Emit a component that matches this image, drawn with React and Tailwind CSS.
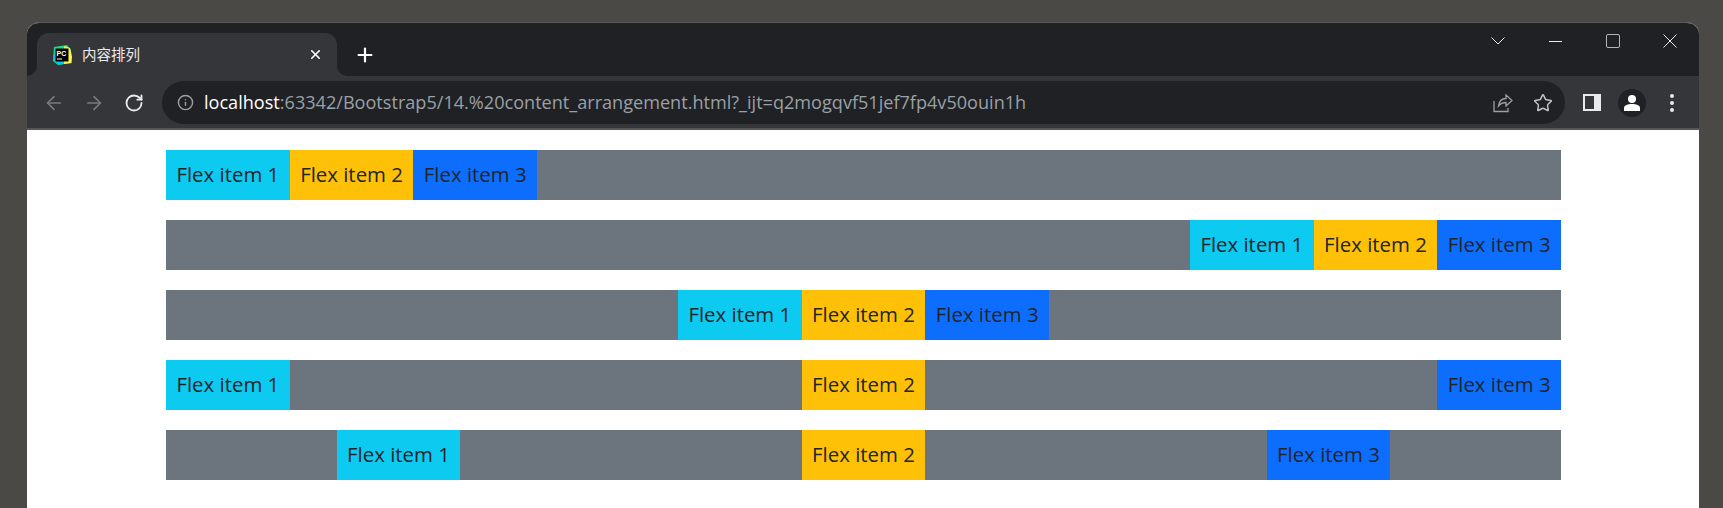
import { Plus, X, ArrowLeft, ArrowRight, RotateCw, Info, Star } from "lucide-react";

const Item = ({ color, children }) => (
  <div className={`w-[123.7px] h-[50px] pb-[2px] flex items-center justify-center text-[20.4px] text-[#212529] ${color}`}>
    {children}
  </div>
);

const Items = () => (
  <>
    <Item color="bg-[#0dcaf0]">Flex item 1</Item>
    <Item color="bg-[#ffc107]">Flex item 2</Item>
    <Item color="bg-[#0d6efd]">Flex item 3</Item>
  </>
);

const App = () => {
  return (
    <div className="h-[508px] overflow-hidden bg-[#4a4945] pt-[22px] pl-[27px] pr-6 font-['Open_Sans','Noto_Sans_CJK_SC',sans-serif]">
      <div className="h-[486px] bg-white rounded-t-xl overflow-hidden flex flex-col border-t border-[#5c5c5c]">
        {/* tab strip */}
        <div className="h-[53px] bg-[#202124] flex shrink-0 pl-[10px] pt-[10px]">
          <div className="relative w-[300px] h-[43px] bg-[#35363a] rounded-t-xl flex items-center pl-[15px] pr-[14px]">
            {/* concave corners at the foot of the tab */}
            <div className="absolute left-[-10px] bottom-0 w-[10px] h-[10px] bg-[#35363a]">
              <div className="w-full h-full bg-[#202124] rounded-br-[10px]" />
            </div>
            <div className="absolute right-[-10px] bottom-0 w-[10px] h-[10px] bg-[#35363a]">
              <div className="w-full h-full bg-[#202124] rounded-bl-[10px]" />
            </div>
            <svg width="20" height="20" viewBox="0 0 20 20" className="shrink-0">
              <path d="M2 2 L15 0 L19 5 L20 18 L6 20 L1 16 Z" fill="#21d789" />
              <path d="M12 1 L18 3 L20 12 L19 18 L12 19 Z" fill="#fcf84a" />
              <path d="M1 10 L3 17 L9 20 L12 17 L5 10 Z" fill="#07c3f2" />
              <rect x="3.5" y="3.5" width="13" height="13" fill="#000" />
              <rect x="5" y="13.5" width="5" height="1" fill="#fff" />
              <text x="4.5" y="10.5" fontSize="7" fontWeight="700" fill="#fff" fontFamily="Liberation Sans, sans-serif">PC</text>
            </svg>
            <span className="ml-[10px] text-[14.5px] text-[#e8eaed] flex-1">内容排列</span>
            <X size={15} strokeWidth={2.5} className="text-white" />
          </div>
          <Plus size={22} strokeWidth={2.4} className="text-white ml-[17px] mt-[11px]" />
          <div className="flex-1 flex items-start justify-end -mt-[2px] pr-[1px] text-[#e8eaed]">
            <div className="w-[58px] flex justify-center">
              <svg width="14" height="8" viewBox="0 0 14 8" fill="none" stroke="currentColor" className="mt-[6px]"><path d="M0.5 0.5 L7 7 L13.5 0.5" /></svg>
            </div>
            <div className="w-[57px] flex justify-center">
              <div className="w-[13px] h-[1px] bg-[#e8eaed] mt-[10px]" />
            </div>
            <div className="w-[57px] flex justify-center">
              <div className="w-[14px] h-[14px] border border-[#b5b6b8] rounded-[2px] mt-[3px]" />
            </div>
            <div className="w-[57px] flex justify-center">
              <svg width="14" height="14" viewBox="0 0 14 14" fill="none" stroke="currentColor" className="mt-[3px]"><path d="M0.5 0.5 L13.5 13.5 M13.5 0.5 L0.5 13.5" /></svg>
            </div>
          </div>
        </div>
        {/* toolbar */}
        <div className="h-[54px] bg-[#35363a] border-b-2 border-[#55565a] flex items-center shrink-0 pl-[16px] pt-[1px] pr-[20px]">
          <ArrowLeft size={22} strokeWidth={1.8} className="text-[#797a7d]" />
          <ArrowRight size={22} strokeWidth={1.8} className="text-[#797a7d] ml-[18px]" />
          <RotateCw size={20} strokeWidth={2.2} className="text-[#e8eaed] ml-[19px]" />
          <div className="ml-[18px] w-[1403px] h-[43px] bg-[#202124] rounded-full flex items-center pl-[15px] pr-[12px]">
            <Info size={17} strokeWidth={2} className="text-[#9aa0a6]" />
            <div className="ml-[10px] mt-[1px] flex-1 text-[18.1px] text-[#9aa0a6] whitespace-nowrap">
              <span className="text-white">localhost</span>:63342/Bootstrap5/14.%20content_arrangement.html?_ijt=q2mogqvf51jef7fp4v50ouin1h
            </div>
            <svg width="20" height="20" viewBox="0 0 20 20" fill="none" stroke="#9aa0a6" strokeWidth="1.3">
              <path d="M19 7.5 L13 2 V5.5 C8 5.5 6 9 5.5 13 C8 10 10 9.5 13 9.5 V13 Z" />
              <path d="M1 8 V18.5 H15 V15" />
            </svg>
            <Star size={20} strokeWidth={1.8} className="text-[#bdc1c6] ml-[20px]" />
          </div>
          <div className="ml-[18px] w-[18px] h-[17px] border-2 border-[#e8eaed] bg-[#e8eaed] flex">
            <div className="w-[9px] bg-[#35363a]" />
          </div>
          <div className="ml-[17px] w-[28px] h-[28px] rounded-full bg-[#202124] flex items-center justify-center">
            <svg width="18" height="18" viewBox="0 0 18 18" fill="#fff">
              <circle cx="9" cy="5" r="4" />
              <path d="M1 17 V14 C1 11 5 10 9 10 C13 10 17 11 17 14 V17 Z" />
            </svg>
          </div>
          <div className="ml-[24px] flex flex-col gap-[3px]">
            <div className="w-[4px] h-[4px] rounded-full bg-[#e8eaed]" />
            <div className="w-[4px] h-[4px] rounded-full bg-[#e8eaed]" />
            <div className="w-[4px] h-[4px] rounded-full bg-[#e8eaed]" />
          </div>
        </div>
        {/* page */}
        <div className="flex-1 pt-5 pl-[139px] pr-[138px] flex flex-col gap-5">
          <div className="flex bg-[#6c757d] justify-start"><Items /></div>
          <div className="flex bg-[#6c757d] justify-end"><Items /></div>
          <div className="flex bg-[#6c757d] justify-center"><Items /></div>
          <div className="flex bg-[#6c757d] justify-between"><Items /></div>
          <div className="flex bg-[#6c757d] justify-around"><Items /></div>
        </div>
      </div>
    </div>
  );
};

export default App;
